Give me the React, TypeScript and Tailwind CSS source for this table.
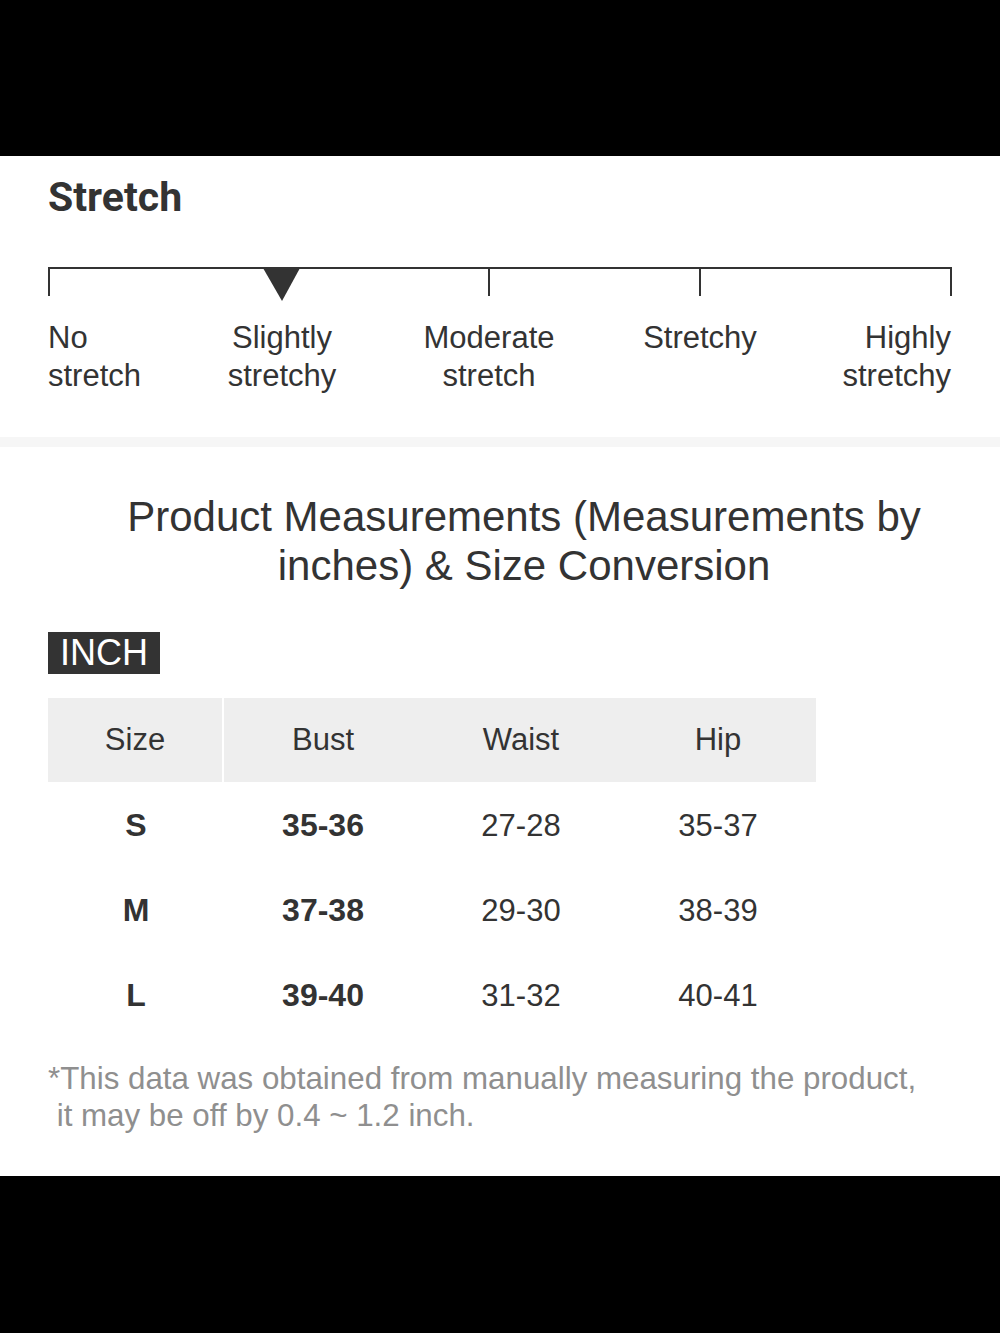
import type React from "react"

const labels = [
  { lines: ["No", "stretch"], align: "text-left" },
  { lines: ["Slightly", "stretchy"], align: "text-center" },
  { lines: ["Moderate", "stretch"], align: "text-center" },
  { lines: ["Stretchy"], align: "text-center" },
  { lines: ["Highly", "stretchy"], align: "text-right" },
]

const rows = [
  { size: "S", bust: "35-36", waist: "27-28", hip: "35-37" },
  { size: "M", bust: "37-38", waist: "29-30", hip: "38-39" },
  { size: "L", bust: "39-40", waist: "31-32", hip: "40-41" },
]

const cols = "grid grid-cols-[176px_198px_198px_196px]"

const StretchScale: React.FC = () => (
  // escala dibujada: linea, marcas y el indicador
  <svg width="904" height="36" viewBox="0 0 904 36" className="block">
    <line x1="0" y1="1" x2="904" y2="1" stroke="#333" strokeWidth="2" />
    <line x1="1" y1="0" x2="1" y2="29" stroke="#333" strokeWidth="2" />
    <line x1="441" y1="0" x2="441" y2="29" stroke="#333" strokeWidth="2" />
    <line x1="652" y1="0" x2="652" y2="29" stroke="#333" strokeWidth="2" />
    <line x1="903" y1="0" x2="903" y2="29" stroke="#333" strokeWidth="2" />
    <polygon points="215,1 252,1 234,34" fill="#333" />
  </svg>
)

export default function App() {
  return (
    <div className="w-[1000px] min-h-[1333px] bg-black flex flex-col font-['Liberation_Sans',Arial,sans-serif] text-[#333]">
      <div className="h-[156px]" />

      <div className="bg-white">
        {/* Stretch */}
        <div className="px-[48px] pt-[17px] pb-[42px]">
          <h2 className="font-['Roboto',sans-serif] font-bold text-[41px] leading-[48px] text-[#333]">Stretch</h2>
          <div className="mt-[46px]">
            <StretchScale />
          </div>
          <div className="grid grid-cols-[131px_206px_208px_214px_144px] w-[904px] mt-[16px] text-[31px] leading-[38px]">
            {labels.map((l, i) => (
              <div key={i} className={`${l.align} whitespace-nowrap`}>
                {l.lines.map((t) => (
                  <div key={t}>{t}</div>
                ))}
              </div>
            ))}
          </div>
        </div>

        <div className="h-[10px] bg-[#f6f6f6]" />

        {/* Medidas */}
        <div className="pl-[48px] pt-[45px] pb-[42px]">
          <h3 className="px-[40px] text-center text-[42px] leading-[49px] text-[#333]">
            Product Measurements (Measurements by inches) &amp; Size Conversion
          </h3>

          <div className="mt-[42px] inline-block bg-[#333] text-white text-[36px] leading-[42px] px-[12px]">INCH</div>

          <div className="mt-[24px] w-[768px] text-[31px]">
            <div className={`${cols} bg-[#eeeeee] h-[84px] items-center text-center`}>
              <div className="h-full flex items-center justify-center border-r-2 border-white">Size</div>
              <div>Bust</div>
              <div>Waist</div>
              <div>Hip</div>
            </div>
            {rows.map((r) => (
              <div key={r.size} className={`${cols} h-[85px] items-center text-center leading-[36px]`}>
                <div className="font-bold text-[32px]">{r.size}</div>
                <div className="font-bold text-[32px]">{r.bust}</div>
                <div className="pt-[2px]">{r.waist}</div>
                <div className="pt-[2px]">{r.hip}</div>
              </div>
            ))}
          </div>

          <p className="mt-[23px] text-[31.3px] leading-[37px] text-[#8f8f8f] whitespace-pre">
            {"*This data was obtained from manually measuring the product,\n it may be off by 0.4 ~ 1.2 inch."}
          </p>
        </div>
      </div>

      <div className="flex-1 bg-black" />
    </div>
  )
}
